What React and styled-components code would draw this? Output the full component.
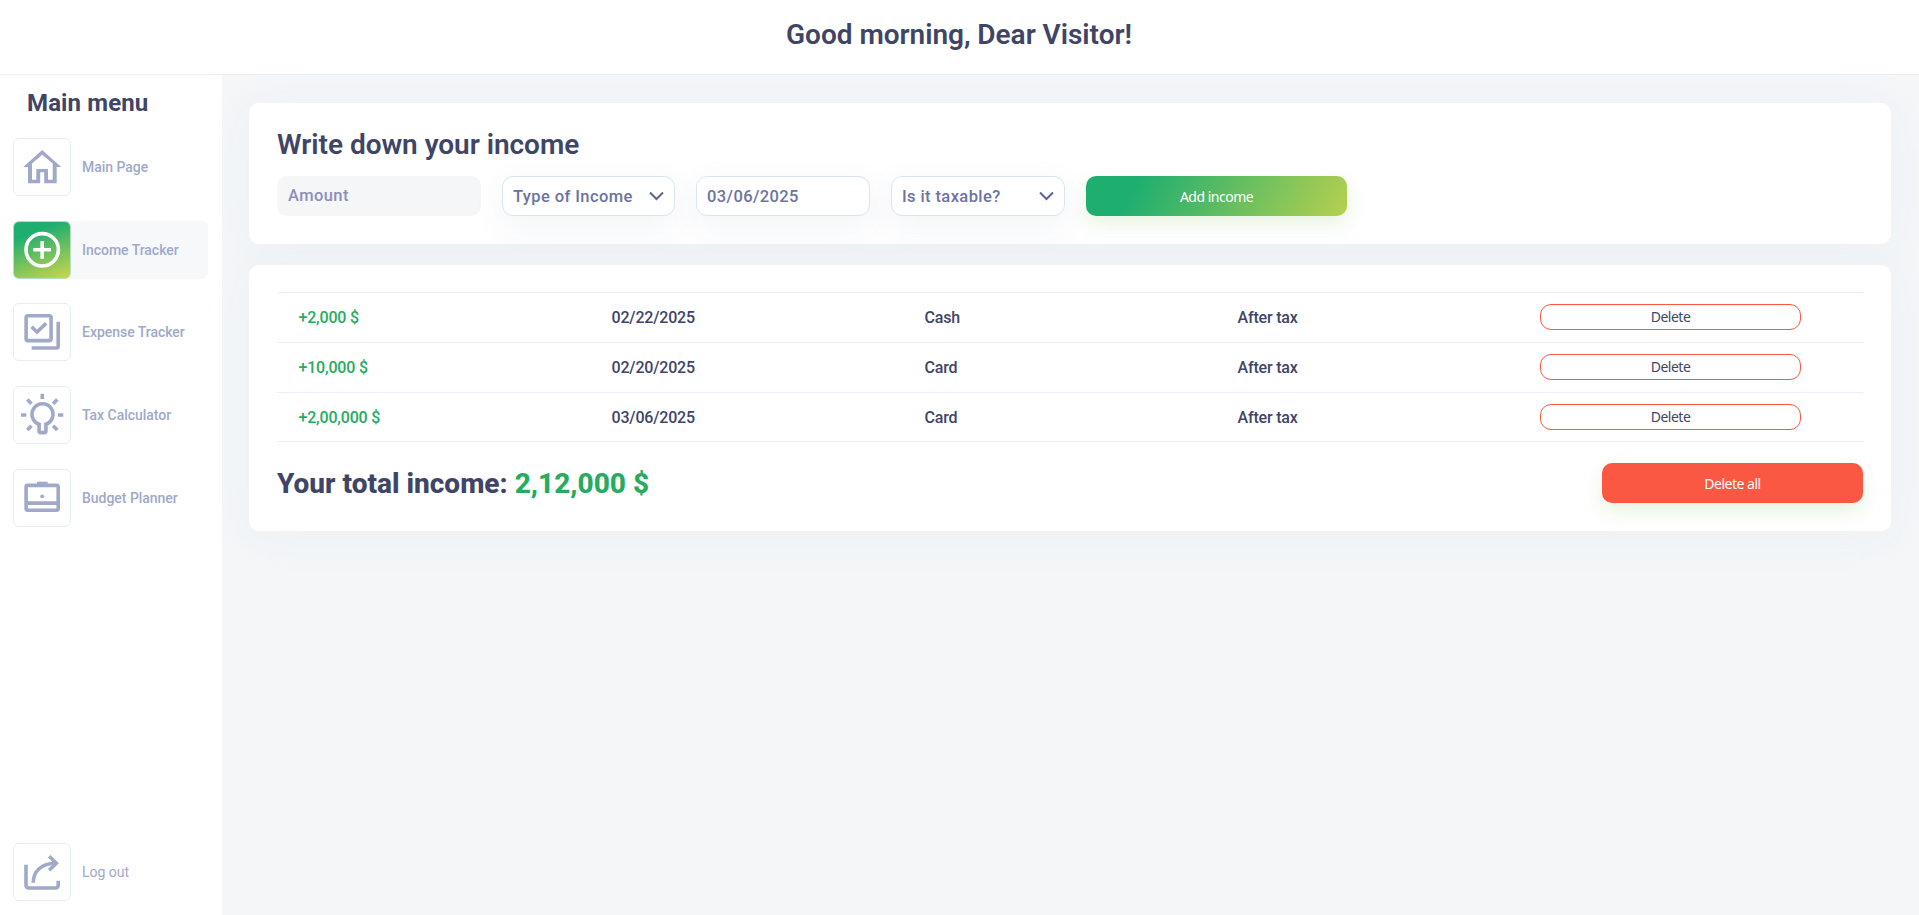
import React from "react";
import styled, { createGlobalStyle, css } from "styled-components";

const GlobalStyle = createGlobalStyle`
  *, *::before, *::after { box-sizing: border-box; }
  body {
    margin: 0;
    background: #f4f6f8;
    font-family: Roboto, "Liberation Sans", sans-serif;
    color: #3f4566;
  }
  button, input { font-family: inherit; }
`;

const Page = styled.div`
  display: flex;
  flex-direction: column;
  height: 100vh;
  overflow: hidden;
`;

const Header = styled.header`
  display: flex;
  justify-content: center;
  flex: none;
  height: 75px;
  padding: 18px 1px 0 0;
  background: #fff;
  border-bottom: 1px solid #ebedf8;
  position: relative;
  z-index: 2;
`;

const Heading = styled.h1`
  margin: 0;
  font-size: 28px;
  line-height: 34px;
  font-weight: ${(p) => p.$weight || 600};
  letter-spacing: ${(p) => p.$spacing || "-0.03px"};
  color: #3f4566;
`;

const Body = styled.div`
  display: flex;
  flex: 1;
  min-height: 0;
`;

const Sidebar = styled.aside`
  display: flex;
  flex-direction: column;
  flex: none;
  width: 222px;
  padding: 13px 14px 14px 13px;
  background: #fff;
  position: relative;
  z-index: 1;
`;

const MenuTitle = styled.h2`
  margin: 0 0 20px 14px;
  font-size: 24px;
  line-height: 30px;
  font-weight: 700;
  letter-spacing: 0.12px;
`;

const NavList = styled.nav`
  display: flex;
  flex-direction: column;
  flex: 1;
  gap: 24.7px;

  & > :last-child { margin-top: auto; }
`;

const NavItem = styled.a`
  display: flex;
  align-items: center;
  gap: 11px;
  height: 58px;
  border-radius: 6px;
  font-size: 14px;
  font-weight: ${(p) => (p.$light ? 400 : 500)};
  letter-spacing: -0.03px;
  color: #a0a9ca;
  background: ${(p) => (p.$active ? "#f6f8fa" : "transparent")};
`;

const IconBox = styled.span`
  display: block;
  flex: none;
  width: 58px;
  height: 58px;
  border: 1px solid #e5eeee;
  border-radius: 6px;
  color: #a0a9ca;
  ${(p) =>
    p.$active &&
    css`
      color: #fff;
      border-color: #b5dfc5;
      background: linear-gradient(160deg, #1eae70 22%, #cdd64a 100%);
    `}

  svg { display: block; margin: -1px; }
`;

const Content = styled.main`
  display: flex;
  flex-direction: column;
  flex: 1;
  gap: 21px;
  padding: 28px 28px 0 27px;
`;

const Card = styled.section`
  padding: ${(p) => p.$padding};
  height: ${(p) => p.$height}px;
  border-radius: 10px;
  background: #fff;
  box-shadow: 0 5px 40px rgba(225, 236, 243, 0.4);
`;

const Form = styled.form`
  display: flex;
  gap: 21px;
  margin-top: 14px;
`;

const AmountInput = styled.input`
  width: 204px;
  height: 40px;
  padding: 0 11px 2px;
  border: 0;
  border-radius: 10px;
  background: #f4f6f8;
  font-size: 16.5px;
  font-weight: 500;
  letter-spacing: 0.4px;
  &::placeholder { color: #8b8fbb; opacity: 1; }
`;

const Field = styled.button`
  display: flex;
  align-items: center;
  justify-content: space-between;
  width: 173px;
  height: 40px;
  padding: 0 10px;
  border: 1px solid #d8e6f1;
  border-radius: 11px;
  background: #fff;
  box-shadow: 0 10px 34px rgba(70, 80, 140, 0.07);
  font-size: 16.5px;
  font-weight: 500;
  letter-spacing: 0.4px;
  color: #6c739f;
  white-space: nowrap;

  & + & { width: 174px; }
`;

const ActionButton = styled.button`
  width: 261px;
  height: 40px;
  padding: 0;
  border: 0;
  border-radius: 10px;
  color: #fff;
  background: ${(p) =>
    p.$danger
      ? "#fa5842"
      : "linear-gradient(118deg, #1eae70 19%, #b6d04f 100%)"};
  box-shadow: 0 8px 20px rgba(106, 180, 60, 0.16);
  font: 400 14px "Noto Sans", sans-serif;
  letter-spacing: -0.5px;
`;

const Table = styled.div`
  display: flex;
  flex-direction: column;
  border-top: 1px solid #ebedf8;
`;

const Row = styled.div`
  display: grid;
  grid-template-columns: repeat(4, 313px) 1fr;
  align-items: center;
  height: 49.75px;
  padding-left: 21px;
  border-bottom: 1px solid #ebedf8;
  font-size: 16px;
  font-weight: 500;
  letter-spacing: -0.18px;
`;

const Cell = styled.span`
  padding: 0.5px 0 0 0.5px;
  color: ${(p) => (p.$income ? "#27ab5f" : "inherit")};
`;

const DeleteButton = styled.button`
  width: 261px;
  height: 26px;
  margin-left: -10px;
  padding: 0;
  border: 1px solid #fa5842;
  border-radius: 11px;
  background: #fff;
  color: #3f4566;
  font: 400 14px/22px "Noto Sans", sans-serif;
  letter-spacing: -0.5px;
`;

const Summary = styled.div`
  display: flex;
  align-items: center;
  justify-content: space-between;
  margin-top: 21px;

  h2 { padding-top: 1px; }
`;

const Total = styled.span`
  color: #27ab5f;
`;

function Glyph({ children }) {
  return (
    <svg width="58" height="58" viewBox="0 0 58 58" fill="none" stroke="currentColor" strokeWidth="3.6">
      {children}
    </svg>
  );
}

const icons = {
  home: (
    <path
      stroke="none"
      fill="currentColor"
      fillRule="evenodd"
      d="M29.2 12 48.2 29H43.7V45.3H31.2V34.3H27.2V45.3H15V29H10.2ZM29.2 16.7 19 25.6V41.7H23.3V31H35V41.7H39.7V25.6Z"
    />
  ),
  plus: (
    <>
      <circle cx="29.2" cy="28.8" r="16.2" />
      <path d="M20.3 28.8H38M29.2 20V37.7" />
    </>
  ),
  check: (
    <>
      <rect x="13.1" y="12.8" width="25" height="24.8" rx="1.8" />
      <path d="M18.6 23.8 24 29 33.2 20.2" />
      <path d="M45.2 18.7V43.2Q45.2 45 43.4 45H18.7" />
    </>
  ),
  bulb: (
    <>
      <path d="M26.1 38.2A10.5 10.5 0 1 1 32.9 38.2V45Q32.9 46.6 31.3 46.6H27.7Q26.1 46.6 26.1 45Z" />
      <path d="M29.3 7.7V13M8 29H13.3M45 29H50.3M14.3 13.6 18.5 17.8M44.3 13.6 40.1 17.8M14.3 44 18.5 39.8M44.3 44 40.1 39.8" />
    </>
  ),
  briefcase: (
    <>
      <rect x="13.1" y="16.4" width="32.1" height="24.8" rx="1.6" />
      <path d="M13 34.1H45.3" />
      <path strokeWidth="2.2" d="M24.1 13.8H34.7" />
      <circle cx="29.2" cy="27.3" r="1.9" fill="currentColor" stroke="none" />
    </>
  ),
  logout: (
    <>
      <path d="M13 21.7V42Q13 45 16 45H42.3Q45.2 45 45.2 42V37.7" />
      <path d="M20.2 39.7C20.2 29 27.5 20.2 43 20.2" />
      <path d="M36.2 13.2 43.3 20.2 36.2 27.2" />
    </>
  ),
};

const menu = [
  { label: "Main Page", icon: "home" },
  { label: "Income Tracker", icon: "plus", active: true },
  { label: "Expense Tracker", icon: "check" },
  { label: "Tax Calculator", icon: "bulb" },
  { label: "Budget Planner", icon: "briefcase" },
  { label: "Log out", icon: "logout", light: true },
];

const incomes = [
  { amount: "+2,000 $", date: "02/22/2025", type: "Cash", tax: "After tax" },
  { amount: "+10,000 $", date: "02/20/2025", type: "Card", tax: "After tax" },
  { amount: "+2,00,000 $", date: "03/06/2025", type: "Card", tax: "After tax" },
];

function Chevron() {
  return (
    <svg width="15" height="10" viewBox="0 0 15 10" fill="none" stroke="#5b6491" strokeWidth="2">
      <path d="M1 1.5 7.5 8 14 1.5" />
    </svg>
  );
}

export default function App() {
  return (
    <>
      <GlobalStyle />
      <Page>
        <Header>
          <Heading>Good morning, Dear Visitor!</Heading>
        </Header>
        <Body>
          <Sidebar>
            <MenuTitle>Main menu</MenuTitle>
            <NavList>
              {menu.map((m) => (
                <NavItem key={m.label} $active={m.active} $light={m.light}>
                  <IconBox $active={m.active}>
                    <Glyph>{icons[m.icon]}</Glyph>
                  </IconBox>
                  {m.label}
                </NavItem>
              ))}
            </NavList>
          </Sidebar>
          <Content>
            <Card $height={141} $padding="25px 28px">
              <Heading as="h2">Write down your income</Heading>
              <Form>
                <AmountInput placeholder="Amount" />
                <Field type="button">
                  Type of Income <Chevron />
                </Field>
                <Field type="button">03/06/2025</Field>
                <Field type="button">
                  Is it taxable? <Chevron />
                </Field>
                <ActionButton type="button">Add income</ActionButton>
              </Form>
            </Card>
            <Card $height={266} $padding="27px 28px">
              <Table>
                {incomes.map((row) => (
                  <Row key={row.amount}>
                    <Cell $income>{row.amount}</Cell>
                    <Cell>{row.date}</Cell>
                    <Cell>{row.type}</Cell>
                    <Cell>{row.tax}</Cell>
                    <DeleteButton>Delete</DeleteButton>
                  </Row>
                ))}
              </Table>
              <Summary>
                <Heading as="h2" $weight={800} $spacing="0px">
                  Your total income: <Total>2,12,000 $</Total>
                </Heading>
                <ActionButton $danger>Delete all</ActionButton>
              </Summary>
            </Card>
          </Content>
        </Body>
      </Page>
    </>
  );
}
